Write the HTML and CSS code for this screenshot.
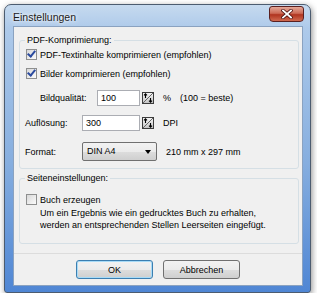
FILE: index.html
```html
<!DOCTYPE html>
<html lang="de">
<head>
    <meta charset="UTF-8">
    <title>Einstellungen</title>
    <link rel="stylesheet" href="styles.css">
</head>
<body>

<svg width="0" height="0" class="defs">
    <defs>
        <linearGradient id="sg" x1="0" y1="0" x2="0" y2="1">
            <stop offset="0" stop-color="#f6f6f6"/>
            <stop offset="1" stop-color="#c4c4c4"/>
        </linearGradient>
        <symbol id="spinner" viewBox="0 0 12 12">
            <rect x="0.5" y="0.5" width="11" height="11" fill="url(#sg)" stroke="#3c3c3c"/>
            <path d="M1 11 L11 1" stroke="#666" stroke-width="1"/>
            <path d="M3.5 1.8 L3.5 6 M2 3.3 L3.5 1.8 L5 3.3" stroke="#000" stroke-width="1.1" fill="none"/>
            <path d="M8.5 6 L8.5 10.2 M7 8.7 L8.5 10.2 L10 8.7" stroke="#000" stroke-width="1.1" fill="none"/>
        </symbol>
    </defs>
</svg>

<div class="window">
    <div class="titlebar">
        <span class="title">Einstellungen</span>
        <span class="close">
            <svg width="12" height="10" viewBox="0 0 12 10">
                <path d="M2 1.5 L10 8.5 M10 1.5 L2 8.5" stroke="#4a1010" stroke-width="3.4" stroke-linecap="square"/>
                <path d="M2 1.5 L10 8.5 M10 1.5 L2 8.5" stroke="#fff" stroke-width="1.8" stroke-linecap="square"/>
            </svg>
        </span>
    </div>

    <div class="client">
        <fieldset class="group">
            <legend>PDF-Komprimierung:</legend>

            <label class="check"><span class="box checked"></span>PDF-Textinhalte komprimieren (empfohlen)</label>
            <label class="check"><span class="box checked"></span>Bilder komprimieren (empfohlen)</label>

            <div class="row indent">
                <span class="lbl">Bildqualität:</span>
                <span class="edit narrow">100</span>
                <svg class="spin" width="12" height="12"><use href="#spinner"/></svg>
                <span class="unit">%</span>
                <span class="note">(100 = beste)</span>
            </div>

            <div class="row">
                <span class="lbl">Auflösung:</span>
                <span class="edit">300</span>
                <svg class="spin" width="12" height="12"><use href="#spinner"/></svg>
                <span class="unit">DPI</span>
            </div>

            <div class="row format">
                <span class="lbl">Format:</span>
                <span class="combo">DIN A4<span class="arrow"></span></span>
                <span class="unit">210 mm x 297 mm</span>
            </div>
        </fieldset>

        <fieldset class="group second">
            <legend>Seiteneinstellungen:</legend>
            <label class="check"><span class="box"></span>Buch erzeugen</label>
            <p class="desc">Um ein Ergebnis wie ein gedrucktes Buch zu erhalten,<br>werden an entsprechenden Stellen Leerseiten eingefügt.</p>
        </fieldset>

        <div class="buttons">
            <button class="btn default">OK</button>
            <button class="btn">Abbrechen</button>
        </div>
    </div>
</div>

</body>
</html>
```

FILE: styles.css
```css
body {
    margin: 0;
    background-color: #fff;
    font-family: "Liberation Sans", Arial, sans-serif;
    font-size: 9px;
    color: #000;
}
.defs {
    position: absolute;
}
.window {
    width: 290px;
    height: 281px;
    margin: 4px 0 0 4px;
    padding: 0 7px 6px 8px;
    border: 1px solid #4c5c70;
    border-radius: 7px 7px 3px 3px;
    background: linear-gradient(to bottom, #c6daef 0%, #aecaea 8%, #86aedf 55%, #4f86d4 100%);
    box-shadow: 1px 2px 6px rgba(0, 0, 0, 0.45);
    display: flex;
    flex-direction: column;
}
.titlebar {
    height: 21px;
    display: flex;
    align-items: flex-start;
    justify-content: space-between;
}
.title {
    font-size: 10.5px;
    color: #1a1a1a;
    margin-top: 6px;
    text-shadow: 0 0 6px #fff, 0 0 3px #fff;
}
.close {
    width: 33px;
    height: 14px;
    margin-top: 1px;
    margin-right: -1px;
    border: 1px solid #5a2020;
    border-radius: 3px 3px 4px 4px;
    background: linear-gradient(to bottom, #e4a898 0%, #cc6a56 45%, #b03420 55%, #d06a50 100%);
    display: flex;
    align-items: center;
    justify-content: center;
}
.client {
    flex: 1;
    background-color: #f0f0f0;
    border: 1px solid #8aa2c0;
    padding: 8px 3px 0 5px;
    display: flex;
    flex-direction: column;
}
.group {
    margin: 0;
    padding: 0 0 4px 5px;
    border: 1px solid #d5dfe5;
    border-radius: 3px;
}
.group legend {
    padding: 0 2px;
    margin-left: 0;
}
.second {
    margin-top: 4px;
    padding-top: 7px;
    padding-bottom: 12px;
}
.check {
    display: flex;
    align-items: center;
    height: 19px;
}
.box {
    width: 9px;
    height: 9px;
    border: 1px solid #8e8f8f;
    background: linear-gradient(135deg, #d8d8d8, #fbfbfb);
    margin-left: 1px;
    margin-right: 3px;
    position: relative;
}
.checked::after {
    content: "";
    position: absolute;
    left: 2px;
    top: -1px;
    width: 3px;
    height: 6px;
    border: solid #2a4a9e;
    border-width: 0 2px 2px 0;
    transform: rotate(40deg);
}
.row {
    display: flex;
    align-items: center;
    height: 25px;
}
.indent {
    padding-left: 15px;
    margin-top: 2px;
}
.format {
    margin-top: 4px;
}
.lbl {
    width: 57px;
}
.edit {
    width: 53px;
    height: 14px;
    border: 1px solid #abadb3;
    background: #fff;
    padding-left: 3px;
    line-height: 14px;
}
.edit.narrow {
    width: 38px;
}
.spin {
    margin-left: 2px;
}
.unit {
    margin-left: 9px;
}
.note {
    margin-left: 9px;
}
.combo {
    width: 69px;
    height: 17px;
    border: 1px solid #707070;
    border-radius: 2px;
    background: linear-gradient(to bottom, #f2f2f2 0%, #ebebeb 50%, #dddddd 51%, #cfcfcf 100%);
    padding-left: 4px;
    line-height: 17px;
    position: relative;
}
.arrow {
    position: absolute;
    right: 5px;
    top: 7px;
    border-left: 3px solid transparent;
    border-right: 3px solid transparent;
    border-top: 4px solid #000;
}
.desc {
    margin: -2px 0 0 15px;
    line-height: 12px;
}
.buttons {
    margin: 9px -3px 0 -5px;
    border-top: 1px solid #dcdcdc;
    display: flex;
    justify-content: center;
    gap: 10px;
    padding-top: 6px;
}
.btn {
    width: 77px;
    height: 19px;
    font-family: "Liberation Sans", Arial, sans-serif;
    font-size: 9px;
    border: 1px solid #707070;
    border-radius: 3px;
    background: linear-gradient(to bottom, #f2f2f2 0%, #ebebeb 50%, #dddddd 51%, #cfcfcf 100%);
}
.btn.default {
    border-color: #3c7fb1;
    box-shadow: inset 0 0 0 1px #a8dbf7;
}
```
